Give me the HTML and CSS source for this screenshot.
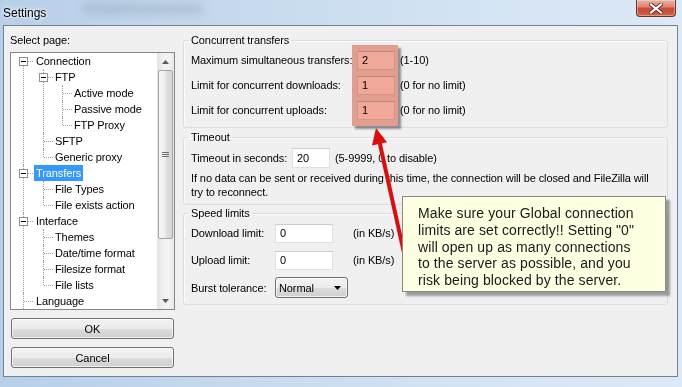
FILE: index.html
```html
<!DOCTYPE html>
<html lang="en">

<head>
    <meta charset="UTF-8">
    <title>Settings</title>
    <link rel="stylesheet" href="styles.css">
</head>

<body>
    <div class="window">
        <div class="titlebar">
            <span class="title">Settings</span>
            <span class="glass-blur"></span>
            <button class="close" type="button">
                <svg width="14" height="11" viewBox="0 0 14 11">
                    <path d="M2 1.5 L12 9.5 M12 1.5 L2 9.5" stroke="#5a2a22" stroke-width="4" stroke-linecap="square" />
                    <path d="M2 1.5 L12 9.5 M12 1.5 L2 9.5" stroke="#fff" stroke-width="2.2" stroke-linecap="square" />
                </svg>
            </button>
        </div>

        <div class="client">
            <div class="sidebar">
                <div class="caption">Select page:</div>
                <div class="treebox">
                    <ul class="tree">
                        <li><span class="exp"></span><span class="node">Connection</span>
                            <ul>
                                <li><span class="exp"></span><span class="node">FTP</span>
                                    <ul>
                                        <li><span class="node">Active mode</span></li>
                                        <li><span class="node">Passive mode</span></li>
                                        <li><span class="node">FTP Proxy</span></li>
                                    </ul>
                                </li>
                                <li><span class="node">SFTP</span></li>
                                <li><span class="node">Generic proxy</span></li>
                            </ul>
                        </li>
                        <li><span class="exp"></span><span class="node sel">Transfers</span>
                            <ul>
                                <li><span class="node">File Types</span></li>
                                <li><span class="node">File exists action</span></li>
                            </ul>
                        </li>
                        <li><span class="exp"></span><span class="node">Interface</span>
                            <ul>
                                <li><span class="node">Themes</span></li>
                                <li><span class="node">Date/time format</span></li>
                                <li><span class="node">Filesize format</span></li>
                                <li><span class="node">File lists</span></li>
                            </ul>
                        </li>
                        <li class="more"><span class="node">Language</span></li>
                    </ul>
                    <div class="vscroll">
                        <div class="sb-btn">
                            <svg width="7" height="4" viewBox="0 0 7 4"><path d="M0 4 L3.5 0 L7 4 Z" fill="#5a5a5a" /></svg>
                        </div>
                        <div class="sb-thumb">
                            <svg width="7" height="6" viewBox="0 0 7 6">
                                <path d="M0 0.5 H7 M0 2.5 H7 M0 4.5 H7" stroke="#6f6f6f" stroke-width="1" />
                            </svg>
                        </div>
                        <div class="sb-track"></div>
                        <div class="sb-btn">
                            <svg width="7" height="4" viewBox="0 0 7 4"><path d="M0 0 L3.5 4 L7 0 Z" fill="#5a5a5a" /></svg>
                        </div>
                    </div>
                </div>
                <button class="btn btn-ok" type="button">OK</button>
                <button class="btn btn-cancel" type="button">Cancel</button>
            </div>

            <div class="pages">
                <fieldset class="group concurrent">
                    <legend>Concurrent transfers</legend>
                    <div class="row">
                        <label>Maximum simultaneous transfers:</label>
                        <input class="field" type="text" value="2">
                        <span class="hint">(1-10)</span>
                    </div>
                    <div class="row">
                        <label>Limit for concurrent downloads:</label>
                        <input class="field" type="text" value="1">
                        <span class="hint">(0 for no limit)</span>
                    </div>
                    <div class="row">
                        <label>Limit for concurrent uploads:</label>
                        <input class="field" type="text" value="1">
                        <span class="hint">(0 for no limit)</span>
                    </div>
                </fieldset>

                <fieldset class="group timeout">
                    <legend>Timeout</legend>
                    <div class="row">
                        <label>Timeout in seconds:</label>
                        <input class="field" type="text" value="20">
                        <span class="hint">(5-9999, 0 to disable)</span>
                    </div>
                    <p class="note">If no data can be sent or received during this time, the connection will be closed and FileZilla will<br>
                        try to reconnect.</p>
                </fieldset>

                <fieldset class="group speed">
                    <legend>Speed limits</legend>
                    <div class="row">
                        <label>Download limit:</label>
                        <input class="field" type="text" value="0">
                        <span class="hint">(in KB/s)</span>
                    </div>
                    <div class="row">
                        <label>Upload limit:</label>
                        <input class="field" type="text" value="0">
                        <span class="hint">(in KB/s)</span>
                    </div>
                    <div class="row">
                        <label>Burst tolerance:</label>
                        <div class="combo">
                            <span>Normal</span>
                            <svg width="7" height="4" viewBox="0 0 7 4"><path d="M0 0 L3.5 4 L7 0 Z" fill="#000" /></svg>
                        </div>
                    </div>
                </fieldset>
            </div>

            <div class="highlight"></div>

            <svg class="arrow" width="674" height="351" viewBox="0 0 674 351">
                <line x1="375.5" y1="116" x2="402" y2="236" stroke="#dc0d0d" stroke-width="4" />
                <path d="M372 102 L383 116.2 L368 119.4 Z" fill="#dc0d0d" />
            </svg>

            <div class="callout">
                Make sure your Global connection<br>
                limits are set correctly!! Setting "0"<br>
                will open up as many connections<br>
                to the server as possible, and you<br>
                risk being blocked by the server.
            </div>
        </div>
    </div>
</body>

</html>
```

FILE: styles.css
```css
body {
    margin: 0px;
    width: 682px;
    height: 387px;
    overflow: hidden;
    font-family: "Liberation Sans", Arial, sans-serif;
    font-size: 11px;
    color: #000;
    background-color: #d9e6f3;
}

.window {
    height: 387px;
    padding: 0px 4px 0px 3px;
    box-sizing: border-box;
    background: linear-gradient(to right, #b7cfe8 0%, #c6d9ee 35%, #d5e4f4 70%, #dce9f6 100%);
}

.titlebar {
    height: 25px;
    display: flex;
    align-items: flex-start;
    position: relative;
}

.title {
    font-size: 12px;
    line-height: 26px;
    text-shadow: 0 0 6px #fff, 0 0 3px #fff;
}

.glass-blur {
    position: absolute;
    left: 80px;
    top: 4px;
    width: 120px;
    height: 10px;
    background-color: rgba(90, 100, 115, 0.18);
    filter: blur(4px);
}

.close {
    margin-left: auto;
    margin-right: 2px;
    width: 40px;
    height: 17px;
    padding: 0px;
    border: 1px solid #6a3328;
    border-top: none;
    border-radius: 0 0 4px 4px;
    background: linear-gradient(#eab1a4 0%, #dc8a78 40%, #c8492f 55%, #d0634a 100%);
    display: flex;
    align-items: center;
    justify-content: center;
    box-shadow: inset 0 0 0 1px rgba(255, 255, 255, 0.35);
}

.client {
    position: relative;
    height: 352px;
    box-sizing: border-box;
    border: 1px solid #6f8192;
    background-color: #f0f0f0;
    display: grid;
    grid-template-columns: 165px 485px;
    column-gap: 8px;
    align-items: start;
    padding: 7px 0px 0px 6px;
    letter-spacing: -0.1px;
}

/* left side */

.caption {
    line-height: 14px;
}

.treebox {
    margin-top: 5px;
    height: 258px;
    box-sizing: border-box;
    border: 1px solid #828790;
    background-color: white;
    display: flex;
}

.tree {
    flex: 1;
    margin: 0px;
    padding: 0px 0px 0px 12px;
    height: 256px;
    overflow: hidden;
}

.tree ul {
    margin: 0px;
    padding: 0px 0px 0px 7px;
}

.tree li {
    list-style: none;
    position: relative;
    padding-left: 13px;
}

.tree ul li {
    padding-left: 12px;
}

.tree li::before {
    content: "";
    position: absolute;
    left: 0px;
    top: 0px;
    bottom: 0px;
    border-left: 1px dotted #a0a0a0;
}

.tree > li:first-child::before {
    top: 8px;
}

.tree ul > li:last-child::before {
    bottom: auto;
    height: 8px;
}

.tree li::after {
    content: "";
    position: absolute;
    left: 1px;
    top: 8px;
    width: 9px;
    border-top: 1px dotted #a0a0a0;
}

.tree li.more {
    padding-bottom: 16px;
}

.exp {
    position: absolute;
    left: -4px;
    top: 4px;
    width: 9px;
    height: 9px;
    box-sizing: border-box;
    border: 1px solid #919191;
    background-color: white;
    z-index: 1;
}

.exp::after {
    content: "";
    position: absolute;
    left: 1px;
    top: 3px;
    width: 5px;
    height: 1px;
    background-color: #000;
}

.node {
    display: inline-block;
    height: 16px;
    line-height: 16px;
    white-space: nowrap;
}

.node.sel {
    background-color: #3399ff;
    color: white;
    margin-left: -2px;
    padding: 0px 2px;
}

.vscroll {
    width: 17px;
    display: flex;
    flex-direction: column;
    background: linear-gradient(to right, #e3e3e3, #f2f2f2 40%, #f2f2f2 70%, #e8e8e8);
}

.sb-btn {
    height: 17px;
    display: flex;
    align-items: center;
    justify-content: center;
}

.sb-thumb {
    height: 169px;
    margin: 0px 1px;
    box-sizing: border-box;
    border: 1px solid #a4a4a4;
    border-radius: 2px;
    background: linear-gradient(to right, #f6f6f6, #ececec 50%, #dfdfdf 51%, #d6d6d6);
    display: flex;
    align-items: center;
    justify-content: center;
}

.sb-track {
    flex: 1;
}

.btn {
    display: block;
    width: 163px;
    height: 21px;
    margin-left: 1px;
    padding: 0px;
    border: 1px solid #707070;
    border-radius: 3px;
    background: linear-gradient(#f2f2f2 0%, #ebebeb 50%, #dddddd 51%, #cfcfcf 100%);
    box-shadow: inset 0 0 0 1px rgba(255, 255, 255, 0.7);
    font-family: "Liberation Sans", Arial, sans-serif;
    font-size: 11px;
    color: #000;
}

.btn-ok {
    margin-top: 8px;
}

.btn-cancel {
    margin-top: 8px;
}

/* right side */

.group {
    margin: 0px;
    min-inline-size: 0;
    border: 1px solid #d5dfe5;
    border-radius: 3px;
    box-shadow: inset 1px 1px 0 rgba(255, 255, 255, 0.8);
}

.group legend {
    padding: 0px 2px;
    margin-left: -2px;
    line-height: 14px;
}

.concurrent {
    padding: 3px 7px 7px;
}

.timeout {
    margin-top: 2px;
    padding: 4px 7px 5px;
}

.speed {
    margin-top: 1px;
    padding: 3px 7px 7px;
}

.row {
    display: grid;
    align-items: center;
    height: 20px;
    white-space: nowrap;
}

.concurrent .row {
    grid-template-columns: 166px 38px auto;
}

.concurrent .row + .row {
    margin-top: 5px;
}

.timeout .row {
    grid-template-columns: 101px 38px auto;
}

.speed .row {
    grid-template-columns: 84px 58px auto;
}

.speed .row + .row {
    margin-top: 7px;
}

.field {
    height: 19px;
    box-sizing: border-box;
    border: 1px solid #dde1e6;
    border-top-color: #c9cdd2;
    padding: 0px 4px;
    font-family: "Liberation Sans", Arial, sans-serif;
    font-size: 11px;
    color: #000;
    background-color: white;
}

.timeout .field {
    height: 20px;
}

.hint {
    margin-left: 5px;
}

.speed .hint {
    margin-left: 20px;
}

.note {
    margin: 3px 0px 0px;
    line-height: 14px;
    white-space: nowrap;
}

.combo {
    width: 73px;
    height: 21px;
    box-sizing: border-box;
    border: 1px solid #707070;
    border-radius: 3px;
    background: linear-gradient(#f2f2f2 0%, #ebebeb 50%, #dddddd 51%, #cfcfcf 100%);
    box-shadow: inset 0 0 0 1px rgba(255, 255, 255, 0.7);
    display: flex;
    align-items: center;
    justify-content: space-between;
    padding: 0px 6px 0px 3px;
}

/* annotations drawn over the dialog */

.highlight {
    position: absolute;
    left: 348px;
    top: 19px;
    width: 46px;
    height: 81px;
    background-color: rgb(240, 168, 152);
    mix-blend-mode: multiply;
    box-shadow: 3px 3px 2px rgba(0, 0, 0, 0.4);
}

.arrow {
    position: absolute;
    left: 0px;
    top: 0px;
}

.callout {
    position: absolute;
    left: 398px;
    top: 170px;
    width: 264px;
    height: 96px;
    box-sizing: border-box;
    padding: 8px 0px 0px 15px;
    border: 1px solid #8a8a80;
    background-color: #ffffe1;
    box-shadow: 4px 4px 2px rgba(0, 0, 0, 0.35);
    font-size: 14px;
    line-height: 16.8px;
    letter-spacing: 0.1px;
    color: #1a1a1a;
    white-space: nowrap;
}
```
